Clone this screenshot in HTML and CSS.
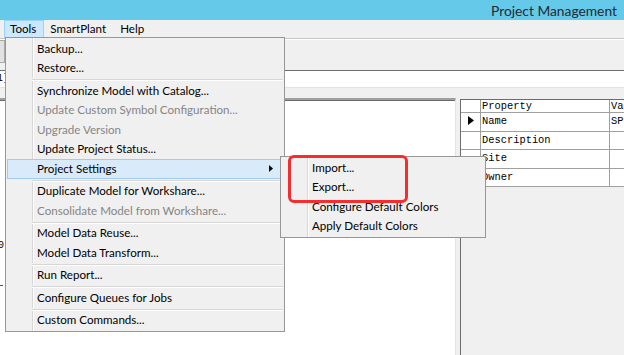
FILE: index.html
```html
<!DOCTYPE html>
<html lang="en">
<head>
  <meta charset="UTF-8" />
  <title>Project Management</title>
  <link rel="stylesheet" href="styles.css">
</head>
<body>

<div class="titlebar">Project Management</div>

<nav class="menubar">
  <span class="menubar-item open">Tools</span>
  <span class="menubar-item">SmartPlant</span>
  <span class="menubar-item">Help</span>
</nav>

<div class="toolbar"><span class="tool-btn"></span></div>
<div class="address"><span class="address-text">1]</span></div>
<div class="strip"></div>

<div class="workspace">
  <div class="tree-pane">
    <div class="tree-label">0]</div>
    <div class="tree-dash"></div>
  </div>
  <div class="props-pane">
    <div class="props-grid">
      <div class="cell rowhead"></div>
      <div class="cell head">Property</div>
      <div class="cell head">Value</div>

      <div class="cell rowhead">
        <svg class="row-arrow" width="6" height="9" viewBox="0 0 6 9"><path d="M0 0 L6 4.5 L0 9 Z" fill="#000"/></svg>
      </div>
      <div class="cell">Name</div>
      <div class="cell">SP3D</div>

      <div class="cell rowhead"></div>
      <div class="cell">Description</div>
      <div class="cell"></div>

      <div class="cell rowhead"></div>
      <div class="cell">Site</div>
      <div class="cell"></div>

      <div class="cell rowhead"></div>
      <div class="cell">Owner</div>
      <div class="cell"></div>
    </div>
  </div>
</div>

<!-- Tools drop-down -->
<div class="menu tools-menu">
  <div class="item">Backup...</div>
  <div class="item">Restore...</div>
  <div class="sep"></div>
  <div class="item">Synchronize Model with Catalog...</div>
  <div class="item disabled">Update Custom Symbol Configuration...</div>
  <div class="item disabled">Upgrade Version</div>
  <div class="item">Update Project Status...</div>
  <div class="item hot">
    <span>Project Settings</span>
    <svg class="sub-arrow" width="4" height="7" viewBox="0 0 4 7"><path d="M0 0 L4 3.5 L0 7 Z" fill="#000"/></svg>
  </div>
  <div class="sep"></div>
  <div class="item">Duplicate Model for Workshare...</div>
  <div class="item disabled">Consolidate Model from Workshare...</div>
  <div class="sep"></div>
  <div class="item">Model Data Reuse...</div>
  <div class="item">Model Data Transform...</div>
  <div class="sep"></div>
  <div class="item">Run Report...</div>
  <div class="sep"></div>
  <div class="item">Configure Queues for Jobs</div>
  <div class="sep"></div>
  <div class="item">Custom Commands...</div>
</div>

<!-- Project Settings sub menu -->
<div class="menu settings-menu">
  <div class="item">Import...</div>
  <div class="item">Export...</div>
  <div class="item">Configure Default Colors</div>
  <div class="item">Apply Default Colors</div>
</div>

<div class="callout"></div>

</body>
</html>
```

FILE: styles.css
```css
body {
  margin: 0;
  width: 624px;
  height: 355px;
  overflow: hidden;
  position: relative;
  background: #fff;
  font-family: Lato, 'Noto Sans', sans-serif;
  font-size: 11.6px;
  color: #000;
}
.titlebar {
  height: 20px;
  line-height: 21px;
  background: #65c9e9;
  color: #1d2b36;
  font-size: 13.8px;
  padding-left: 491px;
  white-space: nowrap;
  overflow: hidden;
}
.menubar {
  height: 18px;
  background: #f0f0f0;
  border-bottom: 1px solid #c4c4c4;
  display: flex;
  align-items: center;
  padding-left: 4px;
}
.menubar-item {
  height: 16px;
  line-height: 16px;
  padding: 0 7px 0 5px;
  border: 1px solid transparent;
}
.menubar-item.open {
  background: #cce8ff;
  border-color: #99d1ff;
}
.toolbar {
  height: 30px;
  background: #f0f0f0;
  border-bottom: 1px solid #6e6e6e;
}
.tool-btn {
  display: block;
  width: 4px;
  height: 21px;
  margin-top: 1px;
  background: #e1e1e1;
  border: 1px solid #a8a8a8;
  border-left: none;
}
.address {
  height: 16px;
  background: #fff;
  border-bottom: 1px solid #e3e3e3;
  overflow: hidden;
}
.address-text {
  display: block;
  margin-left: -3px;
  font-family: 'Liberation Mono', monospace;
  font-size: 10px;
  line-height: 16px;
}
.strip {
  height: 10px;
  background: #f0f0f0;
}
.workspace {
  display: flex;
  height: 258px;
  background: #f0f0f0;
}
.tree-pane {
  width: 455px;
  background: #fff;
  border-top: 2px solid #a0a0a0;
  box-shadow: inset 0 1px 0 #6b6b6b;
  border-right: 1px solid #e3e3e3;
  overflow: hidden;
}
.tree-label {
  margin-top: 140px;
  margin-left: -2px;
  font-family: 'Liberation Mono', monospace;
  font-size: 10px;
  line-height: 12px;
}
.tree-dash {
  margin-top: 33px;
  width: 3px;
  height: 1px;
  background: #555;
}
.props-pane {
  flex: 1;
  margin-left: 4px;
  margin-top: 1px;
  border-left: 1px solid #6b6b6b;
  border-top: 1px solid #6b6b6b;
  overflow: hidden;
}
.props-grid {
  display: grid;
  grid-template-columns: 20px 129px 40px;
  grid-template-rows: 13px repeat(4, 18.5px);
  background: #fff;
  width: 189px;
}
.cell {
  box-sizing: border-box;
  border-right: 1px solid #a0a0a0;
  border-bottom: 1px solid #a0a0a0;
  font-family: 'Liberation Mono', monospace;
  font-size: 10.4px;
  line-height: 12px;
  padding: 2px 0 0 1px;
  white-space: nowrap;
  overflow: hidden;
}
.cell.head {
  padding-top: 0;
}
.cell.rowhead {
  padding: 0;
  display: flex;
  justify-content: center;
}
.row-arrow {
  margin-top: 3px;
}

/* drop-down menus */
.menu {
  position: absolute;
  box-sizing: border-box;
  border: 1px solid #979797;
  padding: 1px;
  background:
    linear-gradient(to right, transparent 26px, #d7d7d7 26px, #d7d7d7 27px, #fff 27px, #fff 28px, transparent 28px),
    #f0f0f0;
}
.tools-menu {
  left: 5px;
  top: 37px;
  width: 280px;
}
.settings-menu {
  left: 280px;
  top: 156px;
  width: 206px;
}
.item {
  box-sizing: border-box;
  height: 19.5px;
  line-height: 18px;
  padding-left: 29px;
  border: 1px solid transparent;
  display: flex;
  align-items: center;
  white-space: nowrap;
}
.item.disabled {
  color: #858585;
}
.item.hot {
  background: #d9eafa;
  border-color: #a3cbee;
}
.sub-arrow {
  margin-left: auto;
  margin-right: 9px;
}
.sep {
  height: 3px;
  margin-left: 25px;
  background: linear-gradient(#f0f0f0 1px, #d7d7d7 1px, #d7d7d7 2px, #fff 2px);
}
.callout {
  position: absolute;
  left: 288px;
  top: 155px;
  width: 114px;
  height: 42px;
  border: 3px solid #f52d2d;
  border-radius: 6px;
}
```
